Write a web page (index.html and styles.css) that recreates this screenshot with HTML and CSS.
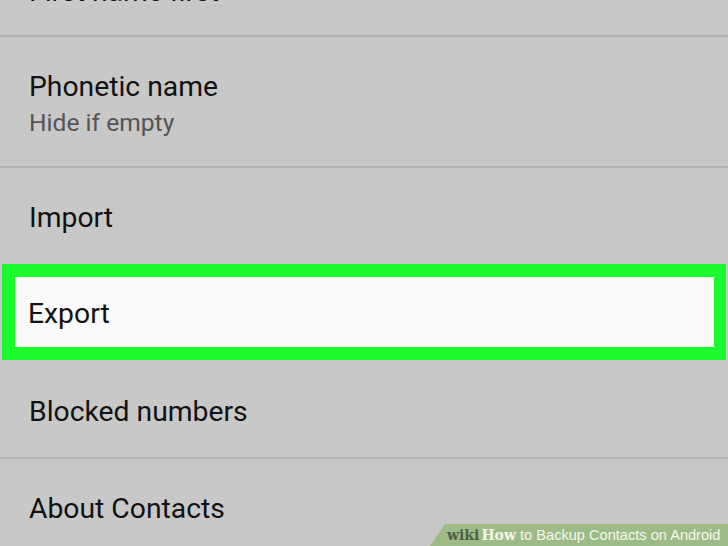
FILE: index.html
```html
<!DOCTYPE html>
<html>
<head>
<meta charset="utf-8">
<link rel="stylesheet" href="styles.css">
</head>
<body>
<div class="list">
  <div class="row row-first divided"><span class="title">First name first</span></div>
  <div class="row row-two divided">
    <span class="title">Phonetic name</span>
    <span class="sub">Hide if empty</span>
  </div>
  <div class="row row-import"><span class="title">Import</span></div>
  <div class="row row-export"><span class="title">Export</span></div>
  <div class="row row-blocked divided"><span class="title">Blocked numbers</span></div>
  <div class="row row-about"><span class="title">About Contacts</span></div>
</div>
<div class="wm"><span class="wm-wiki">wiki</span><span class="wm-how">How</span><span class="wm-rest"> to Backup Contacts on Android</span></div>
</body>
</html>
```
FILE: styles.css
```css
html, body {
  margin: 0;
  padding: 0;
  width: 728px;
  height: 546px;
  overflow: hidden;
  background: #c8c8c8;
  font-family: Roboto, "Noto Sans", sans-serif;
}
.list {
  display: flex;
  flex-direction: column;
  margin-top: -51px;
}
.row {
  display: flex;
  flex-direction: column;
  justify-content: center;
  padding-left: 29px;
  box-sizing: border-box;
}
.divided {
  border-bottom: 2px solid #b3b3b3;
}
.title {
  font-size: 28.3px;
  color: #111;
  line-height: 32px;
}
.sub {
  font-size: 24.6px;
  color: #555;
  line-height: 30px;
  margin-top: 5px;
}
.row-first { height: 88px; }
.row-two { height: 131px; padding-top: 6px; }
.row-import { height: 96px; padding-top: 3px; }
.row-export {
  height: 96px;
  margin: 0 2px;
  border: 13px solid #1cf92e;
  border-right-width: 12px;
  background: #fafafa;
  padding-left: 13px;
  padding-top: 4px;
}
.row-blocked { height: 99px; padding-top: 6px; }
.row-about { height: 98px; padding-top: 2px; }
.wm {
  position: absolute;
  right: 0;
  bottom: 0;
  height: 22px;
  width: 298px;
  background: #9dbb87;
  clip-path: polygon(15px 0, 100% 0, 100% 100%, 0 100%);
  display: flex;
  align-items: center;
  padding-left: 17px;
  box-sizing: border-box;
  white-space: nowrap;
}
.wm-wiki {
  font-family: "DejaVu Serif", serif;
  font-weight: bold;
  font-size: 14px;
  color: #4f5f47;
}
.wm-how {
  font-family: "DejaVu Serif", serif;
  font-weight: bold;
  font-size: 14px;
  color: #f4f8f0;
  margin-left: 2px;
}
.wm-rest {
  font-family: "Liberation Sans", Arial, sans-serif;
  font-size: 14.6px;
  color: #f4f8f0;
  white-space: pre;
}
```
